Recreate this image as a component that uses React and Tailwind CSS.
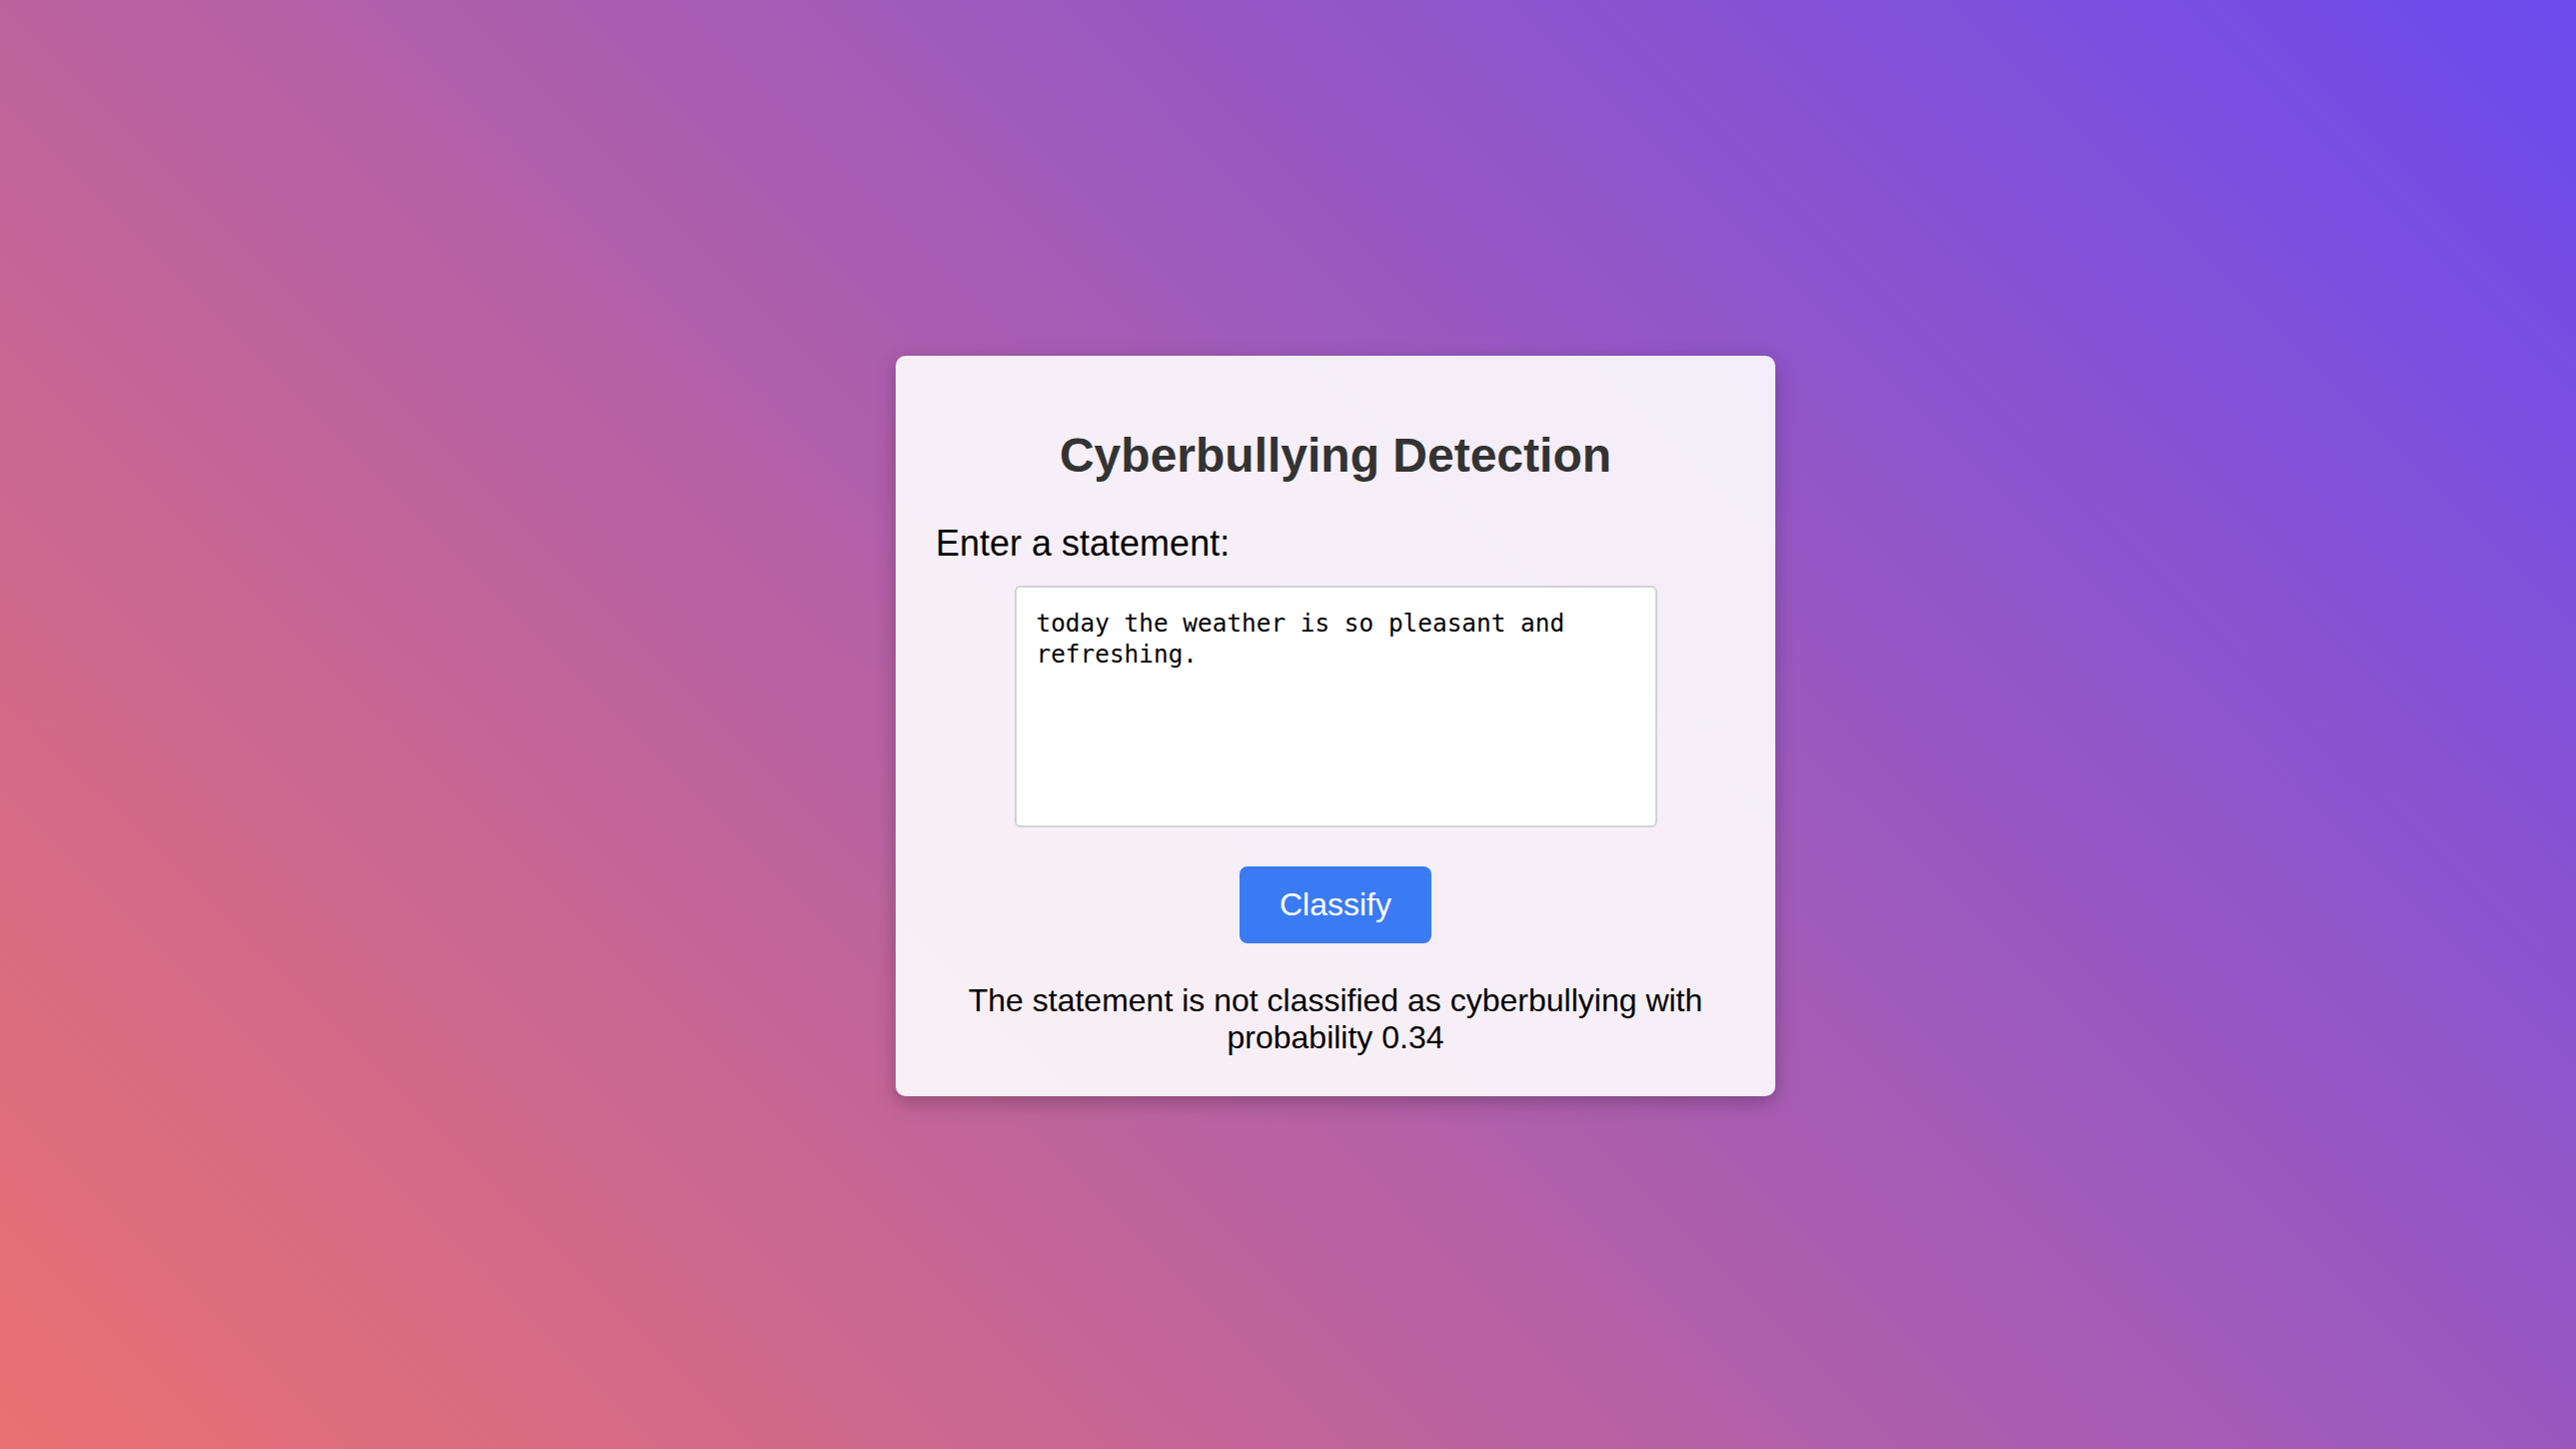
import { useState } from 'react';

export default function App() {
  const [text, setText] = useState('today the weather is so pleasant and refreshing.');
  const result = 'The statement is not classified as cyberbullying with probability 0.34';

  return (
    <div className="min-h-screen w-full flex items-center justify-center pl-[95px] pt-[2px] bg-[linear-gradient(45deg,#ea7171,#6c4aee)] font-['Liberation_Sans',Arial,sans-serif]">
      <div className="w-[880px] bg-white/90 rounded-[10px] p-10 shadow-[0_6px_20px_rgba(0,0,0,0.25)] flex flex-col">
        <h1 className="mt-8 text-center text-[48px] leading-[55px] font-bold text-[#333]">Cyberbullying Detection</h1>

        <label htmlFor="statement" className="mt-10 mb-[22px] text-[36px] leading-[41px] text-black">
          Enter a statement:
        </label>

        {/* input area */}
        <textarea
          id="statement"
          value={text}
          onChange={(e) => setText(e.target.value)}
          className="self-center w-[643px] h-[242px] p-5 border-2 border-[#d2d2d6] rounded-[6px] bg-white resize-none outline-none text-black text-[24.4px] leading-[31px] font-['DejaVu_Sans_Mono',monospace]"
        />

        <button className="self-center mt-[39px] px-10 py-5 rounded-[8px] bg-[#3a7bf4] text-white text-[32px] leading-[37px]">
          Classify
        </button>

        <p className="mt-[39px] text-center text-[32px] leading-[37px] text-black">{result}</p>
      </div>
    </div>
  );
}
